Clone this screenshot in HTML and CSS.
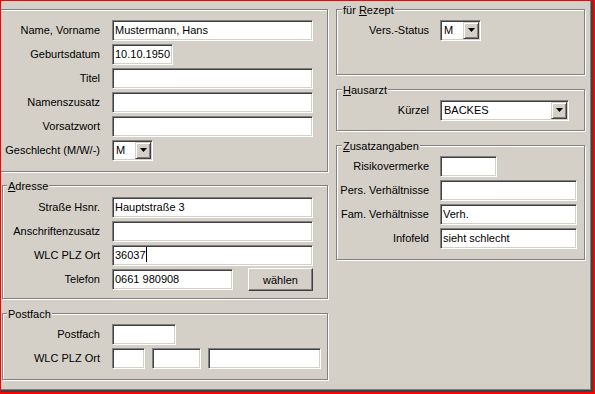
FILE: index.html
```html
<!DOCTYPE html>
<html>
<head>
    <title>Patientendaten</title>
    <link rel="stylesheet" href="styles.css">
</head>
<body>
    <div class="window">
        <div class="panel">
            <div class="col-left">
                <div class="group group-person">
                    <div class="form">
                        <label>Name, Vorname</label>
                        <div class="edit w-name">Mustermann, Hans</div>
                        <label>Geburtsdatum</label>
                        <div class="edit w-date">10.10.1950</div>
                        <label>Titel</label>
                        <div class="edit w-name"></div>
                        <label>Namenszusatz</label>
                        <div class="edit w-name"></div>
                        <label>Vorsatzwort</label>
                        <div class="edit w-name"></div>
                        <label>Geschlecht (M/W/-)</label>
                        <div class="combo w-sex">
                            <span class="combo-text">M</span>
                            <span class="combo-btn"><svg width="7" height="4" viewBox="0 0 7 4"><path d="M0 0h7L3.5 4z" fill="#000"/></svg></span>
                        </div>
                    </div>
                </div>

                <fieldset class="group group-address">
                    <legend><u>A</u>dresse</legend>
                    <div class="form">
                        <label>Straße Hsnr.</label>
                        <div class="edit w-name">Hauptstraße 3</div>
                        <label>Anschriftenzusatz</label>
                        <div class="edit w-name"></div>
                        <label>WLC PLZ Ort</label>
                        <div class="edit w-name">36037<span class="caret"></span></div>
                        <label>Telefon</label>
                        <div class="field">
                            <div class="edit w-phone">0661 980908</div>
                            <button class="btn">wählen</button>
                        </div>
                    </div>
                </fieldset>

                <fieldset class="group group-postbox">
                    <legend>Postfach</legend>
                    <div class="form">
                        <label>Postfach</label>
                        <div class="edit w-box"></div>
                        <label>WLC PLZ Ort</label>
                        <div class="field field-plz">
                            <div class="edit w-plz1"></div>
                            <div class="edit w-plz2"></div>
                            <div class="edit w-plz3"></div>
                        </div>
                    </div>
                </fieldset>
            </div>

            <div class="col-right">
                <fieldset class="group group-recipe">
                    <legend>für <u>R</u>ezept</legend>
                    <div class="form form-right">
                        <label>Vers.-Status</label>
                        <div class="combo w-sex">
                            <span class="combo-text">M</span>
                            <span class="combo-btn"><svg width="7" height="4" viewBox="0 0 7 4"><path d="M0 0h7L3.5 4z" fill="#000"/></svg></span>
                        </div>
                    </div>
                </fieldset>

                <fieldset class="group group-doctor">
                    <legend><u>H</u>ausarzt</legend>
                    <div class="form form-right">
                        <label>Kürzel</label>
                        <div class="combo w-doctor">
                            <span class="combo-text">BACKES</span>
                            <span class="combo-btn"><svg width="7" height="4" viewBox="0 0 7 4"><path d="M0 0h7L3.5 4z" fill="#000"/></svg></span>
                        </div>
                    </div>
                </fieldset>

                <fieldset class="group group-extra">
                    <legend><u>Z</u>usatzangaben</legend>
                    <div class="form form-right">
                        <label>Risikovermerke</label>
                        <div class="edit w-short"></div>
                        <label>Pers. Verhältnisse</label>
                        <div class="edit w-wide"></div>
                        <label>Fam. Verhältnisse</label>
                        <div class="edit w-wide">Verh.</div>
                        <label>Infofeld</label>
                        <div class="edit w-wide">sieht schlecht</div>
                    </div>
                </fieldset>
            </div>
        </div>
    </div>
</body>
</html>
```

FILE: styles.css
```css
body {
    margin: 0;
    font-family: "Liberation Sans", Arial, sans-serif;
    font-size: 11px;
    color: #000;
    background-color: #fff;
}

.window {
    width: 595px;
    height: 394px;
    box-sizing: border-box;
    border: 1px solid #ff0000;
    border-right-width: 2px;
    border-bottom-width: 2px;
}

.panel {
    height: 100%;
    box-sizing: border-box;
    display: flex;
    align-items: flex-start;
    overflow: hidden;
    background-color: #d4d0c8;
    border-right: 2px solid #404040;
    border-bottom: 2px solid #404040;
    box-shadow: inset -1px -1px #808080;
}

.col-left {
    flex: none;
    width: 327px;
}

.col-right {
    flex: none;
    width: 249px;
    margin-left: 8px;
}

/* etched group boxes */
.group {
    box-sizing: border-box;
    margin: 0;
    min-width: 0;
    border: 1px solid #808080;
    box-shadow: inset 1px 1px #fff, 1px 1px #fff;
}

.group legend {
    margin-left: 4px;
    padding: 2px 1px 0;
    line-height: 13px;
    background-color: #d4d0c8;
}

.col-right .group legend {
    margin-left: 5px;
}

.group-person {
    width: 330px;
    margin: 8px 0 0 -3px;
    padding: 10px 0 10px 4px;
}

.group-address {
    width: 326px;
    margin: 6px 0 0 1px;
    padding: 4px 0 8px;
}

.group-postbox {
    width: 326px;
    margin: 7px 0 0 1px;
    padding: 3px 0 10px;
}

.group-recipe {
    margin-top: 1px;
    padding: 3px 0 33px;
}

.group-doctor {
    margin-top: 7px;
    padding: 3px 0 9px;
}

.group-extra {
    margin-top: 7px;
    padding: 3px 0 10px;
}

/* label / field rows */
.form {
    display: grid;
    grid-template-columns: 97px auto;
    grid-auto-rows: 21px;
    column-gap: 12px;
    row-gap: 3px;
    align-items: center;
    justify-items: start;
}

.form-right {
    grid-template-columns: 92px auto;
    column-gap: 11px;
}

.form label {
    justify-self: end;
    line-height: 21px;
    white-space: nowrap;
}

.field {
    display: flex;
    align-items: center;
}

.field-plz {
    gap: 7px;
}

.edit,
.combo {
    box-sizing: border-box;
    height: 21px;
    background-color: #fff;
    border: 1px solid;
    border-color: #808080 #fff #fff #808080;
    box-shadow: inset 1px 1px #404040, inset -1px -1px #d4d0c8;
    line-height: 19px;
    white-space: nowrap;
    overflow: hidden;
}

.edit {
    padding-left: 2px;
}

.caret {
    display: inline-block;
    width: 1px;
    height: 15px;
    background-color: #000;
    vertical-align: -3px;
}

.combo {
    display: flex;
}

.combo-text {
    flex: 1;
    padding-left: 3px;
}

.combo-btn {
    box-sizing: border-box;
    width: 16px;
    height: 17px;
    margin: 1px 1px 1px 0;
    display: flex;
    align-items: center;
    justify-content: center;
    background-color: #d4d0c8;
    border: 1px solid;
    border-color: #d4d0c8 #404040 #404040 #d4d0c8;
    box-shadow: inset 1px 1px #fff, inset -1px -1px #808080;
}

.combo-btn svg {
    display: block;
    margin-top: -1px;
}

.btn {
    box-sizing: border-box;
    width: 65px;
    height: 23px;
    margin-left: 15px;
    padding: 0;
    font: inherit;
    color: #000;
    background-color: #d4d0c8;
    border: 1px solid;
    border-color: #fff #404040 #404040 #fff;
    box-shadow: inset -1px -1px #808080;
}

.w-name { width: 201px; }
.w-date { width: 61px; }
.w-sex { width: 41px; }
.w-phone { width: 121px; }
.w-box { width: 64px; }
.w-plz1 { width: 33px; }
.w-plz2 { width: 49px; }
.w-plz3 { width: 113px; }
.w-doctor { width: 129px; }
.w-short { width: 57px; }
.w-wide { width: 137px; }
```
